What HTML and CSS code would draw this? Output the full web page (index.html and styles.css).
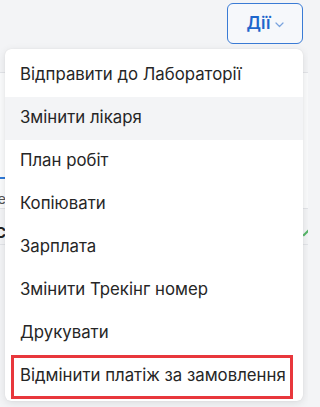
FILE: index.html
```html
<!DOCTYPE html>
<html lang="uk">
<head>
<meta charset="utf-8">
<link rel="stylesheet" href="styles.css">
</head>
<body>
<div class="page">
  <div class="topbar">
    <button class="actions-btn">Дії <svg class="chev" width="9" height="6" viewBox="0 0 9 6"><path d="M1 1l3.5 3.5L8 1" fill="none" stroke="#7aa3de" stroke-width="1.2" stroke-linecap="round" stroke-linejoin="round"/></svg></button>
  </div>
  <div class="content">
    <div class="row row-head"></div>
    <div class="row row-tabs"><span class="tab">Ісе</span></div>
    <div class="row row-title"><span class="title">С</span><span class="check"></span></div>
    <div class="row row-spacer"></div>
    <div class="status"><span class="dot"></span><span>завершено</span></div>
  </div>

  <ul class="menu">
    <li class="item">Відправити до Лабораторії</li>
    <li class="item hover">Змінити лікаря</li>
    <li class="item">План робіт</li>
    <li class="item">Копіювати</li>
    <li class="item">Зарплата</li>
    <li class="item">Змінити Трекінг номер</li>
    <li class="item">Друкувати</li>
    <li class="item">Відмінити платіж за замовлення</li>
  </ul>
  <div class="highlight"></div>
</div>
</body>
</html>
```
FILE: styles.css
```css
* { box-sizing: border-box; }
html, body { margin: 0; padding: 0; }
body {
  background: #f3f4f6;
  font-family: Inter, "Noto Sans", sans-serif;
  width: 308px;
  height: 407px;
  overflow: hidden;
}
.page { position: relative; width: 308px; height: 407px; }
.topbar {
  height: 49px;
  display: flex;
  justify-content: flex-end;
  padding: 3px 5px 0 0;
}
.actions-btn {
  width: 76px;
  height: 41px;
  border: 1.5px solid #3a7bd5;
  border-radius: 6px;
  background: #f6f8fb;
  color: #1e66cc;
  font-family: Inter, sans-serif;
  font-weight: 600;
  font-size: 17px;
  display: flex;
  align-items: center;
  justify-content: center;
  gap: 4px;
  padding: 0 0 2px 0;
}
.chev { margin-top: 4px; }
.content { background: #f3f4f6; }
.row { border-bottom: 1px solid #e2e4e8; }
.row-head { height: 24px; }
.row-tabs {
  height: 136px;
  border-bottom: 1px solid #e2e4e8;
  position: relative;
  padding-top: 105px;
  background: #fafbfc;
}
.row-tabs::before {
  content: "";
  position: absolute;
  left: 0; top: 104px;
  width: 40px; height: 2px;
  background: #2f79d6;
}
.tab { font-size: 14px; color: #555; margin-left: -14px; display: block; padding-top: 12px; }
.row-title { height: 36px; display: flex; justify-content: space-between; align-items: flex-end; padding-bottom: 2px; }
.title { font-weight: 700; font-size: 15px; color: #222; margin-left: -5px; }
.check { width: 8px; height: 2px; background: #56b768; transform: rotate(-45deg); margin-right: -2px; margin-bottom: 8px; }
.row-spacer { height: 157px; border: 0; }
.status { display: flex; align-items: center; gap: 8px; padding-left: 28px; font-size: 15px; color: #444; height: 20px; }
.dot { width: 8px; height: 8px; border-radius: 50%; background: #3cae4f; }

.menu {
  position: absolute;
  left: 5px;
  top: 49px;
  width: 298px;
  margin: 0;
  padding: 5px 0 3px;
  list-style: none;
  background: #fff;
  border-radius: 6px;
  box-shadow: 0 2px 8px rgba(0,0,0,0.10), 0 0 1px rgba(0,0,0,0.12);
}
.item {
  height: 43px;
  line-height: 40px;
  padding-left: 15px;
  font-size: 16.8px;
  color: #262626;
  white-space: nowrap;
}
.item.hover { background: #f3f4f6; }
.highlight {
  position: absolute;
  left: 11px;
  top: 355px;
  width: 282px;
  height: 44px;
  border: 3px solid #e8373c;
}
```
